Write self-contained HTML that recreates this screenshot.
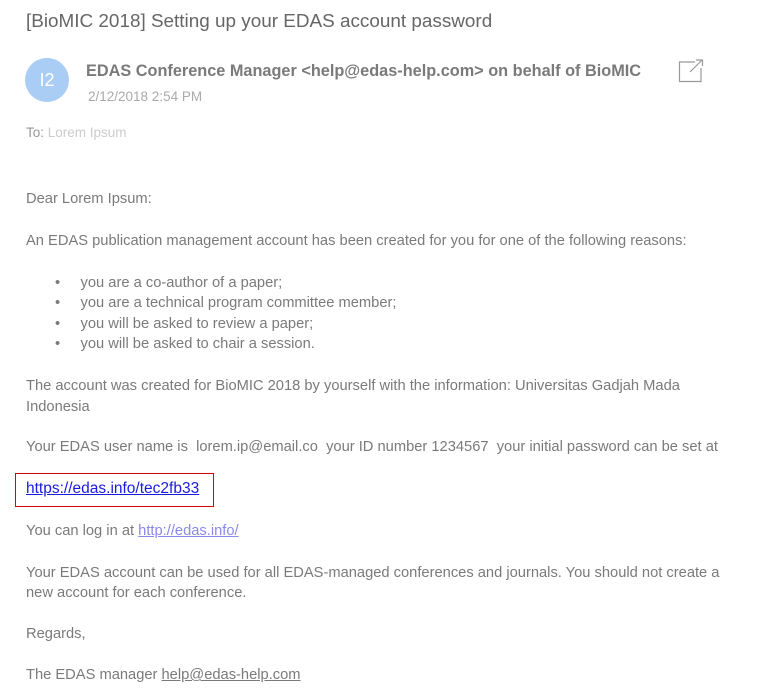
<!DOCTYPE html>
<html><head><meta charset="utf-8"><style>
body{margin:0;width:757px;height:697px;background:#fff;font-family:"Liberation Sans",sans-serif;color:#7a7a7a;position:relative;overflow:hidden}
.l{position:absolute;left:26px;font-size:14.7px;line-height:16px;white-space:nowrap}
a{color:#8a8ae8;text-decoration:underline}
</style></head><body>
<div style="position:absolute;left:26px;top:11px;font-size:18.9px;line-height:22px;color:#666">[BioMIC 2018] Setting up your EDAS account password</div>
<div style="position:absolute;left:25px;top:58px;width:44px;height:44px;border-radius:50%;background:#a9cdf5;color:#fff;font-size:18px;line-height:44px;text-align:center">I2</div>
<div style="position:absolute;left:86px;top:61px;font-size:16.3px;line-height:20px;font-weight:bold;color:#7a7a7a">EDAS Conference Manager &lt;help@edas-help.com&gt; on behalf of BioMIC</div>
<div style="position:absolute;left:88px;top:89px;font-size:13.5px;line-height:16px;color:#aaa">2/12/2018 2:54 PM</div>
<svg style="position:absolute;left:677px;top:59px" width="28" height="24" viewBox="0 0 28 24"><path d="M18 3H2.5V22.5H24V9" fill="none" stroke="#999" stroke-width="1.2"/><path d="M13 13L25 1M19 1H25.5V7" fill="none" stroke="#999" stroke-width="1.2"/></svg>
<div class="l" style="top:125px;font-size:13.5px;color:#999">To: <span style="color:#ccc">Lorem Ipsum</span></div>
<div class="l" style="top:191px">Dear Lorem Ipsum:</div>
<div class="l" style="top:233px">An EDAS publication management account has been created for you for one of the following reasons:</div>
<div class="l" style="top:275px;left:55px">•&nbsp;&nbsp;&nbsp;&nbsp;&nbsp;you are a co-author of a paper;</div>
<div class="l" style="top:295px;left:55px">•&nbsp;&nbsp;&nbsp;&nbsp;&nbsp;you are a technical program committee member;</div>
<div class="l" style="top:316px;left:55px">•&nbsp;&nbsp;&nbsp;&nbsp;&nbsp;you will be asked to review a paper;</div>
<div class="l" style="top:336px;left:55px">•&nbsp;&nbsp;&nbsp;&nbsp;&nbsp;you will be asked to chair a session.</div>
<div class="l" style="top:378px">The account was created for BioMIC 2018 by yourself with the information: Universitas Gadjah Mada</div>
<div class="l" style="top:399px">Indonesia</div>
<div class="l" style="top:439px">Your EDAS user name is &nbsp;lorem.ip@email.co &nbsp;your ID number 1234567 &nbsp;your initial password can be set at</div>
<div style="position:absolute;left:15px;top:473px;width:197px;height:32px;border:1px solid #d00"></div>
<div class="l" style="top:481px;font-size:15.5px"><a style="color:#1a1ae0">https://edas.info/tec2fb33</a></div>
<div class="l" style="top:523px">You can log in at <a>http://edas.info/</a></div>
<div class="l" style="top:565px">Your EDAS account can be used for all EDAS-managed conferences and journals. You should not create a</div>
<div class="l" style="top:585px">new account for each conference.</div>
<div class="l" style="top:626px">Regards,</div>
<div class="l" style="top:667px">The EDAS manager <span style="text-decoration:underline">help@edas-help.com</span></div>
</body></html>
